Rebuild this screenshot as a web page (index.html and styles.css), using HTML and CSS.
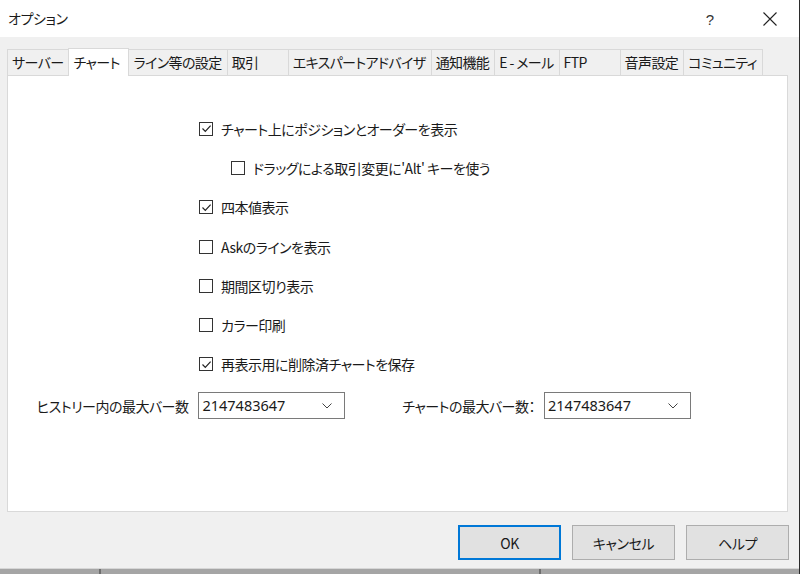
FILE: index.html
```html
<!DOCTYPE html>
<html lang="ja">
<head>
<meta charset="utf-8">
<title>オプション</title>
<link rel="stylesheet" href="styles.css">
</head>
<body>
<div class="window">
  <div class="titlebar">
    <span class="title">オプション</span>
    <span class="help">?</span>
    <span class="close">
      <svg width="14" height="14" viewBox="0 0 14 14"><path d="M0.5 0.5 L13.5 13.5 M13.5 0.5 L0.5 13.5" stroke="#222" stroke-width="1.1" fill="none"/></svg>
    </span>
  </div>
  <div class="client">
    <div class="tabs">
      <div class="tab">サーバー</div>
      <div class="tab active">チャート</div>
      <div class="tab">ライン等の設定</div>
      <div class="tab">取引</div>
      <div class="tab">エキスパートアドバイザ</div>
      <div class="tab">通知機能</div>
      <div class="tab">E - メール</div>
      <div class="tab">FTP</div>
      <div class="tab">音声設定</div>
      <div class="tab">コミュニティ</div>
    </div>
    <div class="panel">
      <div class="checks">
        <label class="row"><span class="box checked"><svg width="11" height="11" viewBox="0 0 11 11"><path d="M1.5 5.5 L4.3 8.3 L9.6 2.6" stroke="#222" stroke-width="1.2" fill="none"/></svg></span>チャート上にポジションとオーダーを表示</label>
        <label class="row sub"><span class="box"></span>ドラッグによる取引変更に'Alt' キーを使う</label>
        <label class="row"><span class="box checked"><svg width="11" height="11" viewBox="0 0 11 11"><path d="M1.5 5.5 L4.3 8.3 L9.6 2.6" stroke="#222" stroke-width="1.2" fill="none"/></svg></span>四本値表示</label>
        <label class="row"><span class="box"></span>Askのラインを表示</label>
        <label class="row"><span class="box"></span>期間区切り表示</label>
        <label class="row"><span class="box"></span>カラー印刷</label>
        <label class="row"><span class="box checked"><svg width="11" height="11" viewBox="0 0 11 11"><path d="M1.5 5.5 L4.3 8.3 L9.6 2.6" stroke="#222" stroke-width="1.2" fill="none"/></svg></span>再表示用に削除済チャートを保存</label>
      </div>
      <div class="fields">
        <div class="field left">
          <span class="flabel">ヒストリー内の最大バー数</span>
          <div class="select"><span>2147483647</span><svg width="10" height="6" viewBox="0 0 10 6"><path d="M0.5 0.5 L5 5 L9.5 0.5" stroke="#444" stroke-width="1" fill="none"/></svg></div>
        </div>
        <div class="field right">
          <span class="flabel">チャートの最大バー数：</span>
          <div class="select"><span>2147483647</span><svg width="10" height="6" viewBox="0 0 10 6"><path d="M0.5 0.5 L5 5 L9.5 0.5" stroke="#444" stroke-width="1" fill="none"/></svg></div>
        </div>
      </div>
    </div>
    <div class="buttons">
      <button class="btn default">OK</button>
      <button class="btn">キャンセル</button>
      <button class="btn">ヘルプ</button>
    </div>
  </div>
  <div class="taskbar">
    <div class="seg s1"></div>
    <div class="seg s2"></div>
    <div class="seg s3"></div>
  </div>
</div>
</body>
</html>
```
FILE: styles.css
```css
* { box-sizing: border-box; }
html, body { margin: 0; padding: 0; }
body {
  width: 800px;
  height: 574px;
  overflow: hidden;
  background: #f0f0f0;
  font-family: "Noto Sans CJK JP", "Noto Sans", sans-serif;
  font-feature-settings: "palt";
  font-size: 14px;
  color: #1a1a1a;
}
.window {
  width: 800px;
  height: 574px;
  display: flex;
  flex-direction: column;
  border-right: 1px solid #2b2b2b;
  background: #f0f0f0;
}
.titlebar {
  height: 37px;
  flex: none;
  background: #ffffff;
  display: flex;
  align-items: center;
  padding-left: 8px;
}
.title { font-size: 14px; flex: 1; line-height: 1; margin-top: -1px; letter-spacing: -0.4px; }
.help { font-family: "Liberation Sans", sans-serif; font-size: 15px; color: #333; width: 30px; margin-right: 38px; text-align: center; margin-top: 1px; }
.close { width: 14px; height: 14px; display: flex; margin-right: 22px; }
.client {
  flex: 1;
  display: flex;
  flex-direction: column;
  padding: 11px 0 0 7px;
}
.tabs {
  display: flex;
  align-items: flex-end;
  height: 27px;
  position: relative;
  z-index: 1;
}
.tab {
  height: 26px;
  min-width: 61px;
  padding: 0 5px 1px 4px;
  border: 1px solid #d9d9d9;
  border-bottom: none;
  border-right: none;
  background: #f0f0f0;
  display: flex;
  align-items: center;
  line-height: 1;
  white-space: nowrap;
  font-size: 14px;
  letter-spacing: -0.6px;
}
.tab:nth-child(10) { border-right: 1px solid #d9d9d9; }
.tab.active {
  height: 28px;
  margin-bottom: -1px;
  background: #ffffff;
  border-right: 1px solid #d9d9d9;
  padding-bottom: 2px;
}
.tab.active + .tab { border-left: none; }
.panel {
  width: 781px;
  height: 437px;
  background: #ffffff;
  border: 1px solid #d9d9d9;
  display: flex;
  flex-direction: column;
  padding-top: 33px;
}
.checks {
  display: flex;
  flex-direction: column;
  padding-left: 191px;
}
.row {
  height: 39.3px;
  display: flex;
  align-items: center;
  gap: 8px;
  line-height: 1;
  white-space: nowrap;
  letter-spacing: -0.5px;
}
.row.sub { padding-left: 32px; }
.box {
  width: 14px;
  height: 14px;
  flex: none;
  border: 1px solid #333333;
  background: #ffffff;
  display: flex;
  align-items: center;
  justify-content: center;
}
.fields {
  display: flex;
  margin-top: 8px;
  height: 27px;
}
.field { display: flex; align-items: center; }
.field.left { width: 337px; }
.flabel {
  text-align: right;
  padding-right: 10px;
  white-space: nowrap;
  line-height: 1;
  letter-spacing: -0.5px;
}
.field.left .flabel { width: 191px; }
.field.right .flabel { width: 199px; padding-right: 9px; }
.select {
  width: 147px;
  height: 27px;
  border: 1px solid #7a7a7a;
  background: #ffffff;
  display: flex;
  align-items: center;
  justify-content: space-between;
  padding: 0 12px 0 3px;
  font-size: 14.5px;
  font-family: "Noto Sans", sans-serif;
  line-height: 1;
}
.buttons {
  display: flex;
  justify-content: flex-end;
  gap: 11px;
  padding-right: 10px;
  margin-top: 13px;
}
.btn {
  width: 103px;
  height: 35px;
  background: #e1e1e1;
  border: 1px solid #adadad;
  font-family: "Noto Sans CJK JP", "Noto Sans", sans-serif;
  font-feature-settings: "palt";
  font-size: 14px;
  color: #1a1a1a;
  padding: 0;
  line-height: 1;
  letter-spacing: -0.4px;
}
.btn.default { border: 2px solid #0078d7; }
.taskbar {
  margin-top: auto;
  height: 6px;
  flex: none;
  display: flex;
  border-top: 1px solid #d6d6d6;
  background: #a5a5a5;
}
.seg { height: 100%; }
.s1 { width: 101px; border-right: 2px solid #6e6e6e; }
.s2 { width: 440px; border-right: 2px solid #6e6e6e; }
.s3 { flex: 1; }
```
